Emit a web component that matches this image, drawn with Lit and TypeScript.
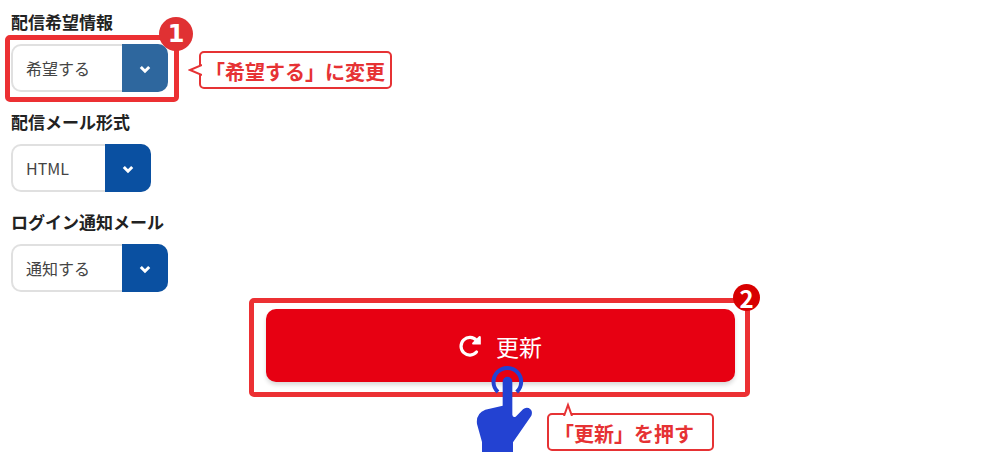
import { LitElement, html, css } from "lit";
import { customElement, property } from "lit/decorators.js";

@customElement("select-field")
class SelectField extends LitElement {
  @property() label = "";
  @property({ attribute: false }) options: string[] = [];
  @property({ type: Boolean, reflect: true }) active = false;

  static styles = css`
    :host { display: block; }
    .label {
      display: block;
      font-size: 17px;
      font-weight: 700;
      line-height: 24px;
      color: #222;
      margin-bottom: 10px;
    }
    .control {
      position: relative;
      display: inline-block;
      vertical-align: top;
    }
    .select {
      appearance: none;
      display: block;
      box-sizing: border-box;
      height: 48px;
      min-width: 140px;
      margin: 0;
      padding: 0 75px 0 13px;
      border: 2px solid #e0e0e0;
      border-radius: 10px;
      background: #fff;
      color: #444;
      font: inherit;
      font-size: 16px;
    }
    .toggle {
      position: absolute;
      inset: 0 0 0 auto;
      width: 46px;
      display: grid;
      place-items: center;
      background: #0a50a1;
      border-radius: 0 10px 10px 0;
      pointer-events: none;
    }
    :host([active]) .toggle { background: #2e679e; }
    .chevron { width: 12px; height: 9px; margin-top: 3px; }
  `;

  render() {
    return html`
      <label class="label" for="choice">${this.label}</label>
      <div class="control">
        <select class="select" id="choice">
          ${this.options.map((o) => html`<option>${o}</option>`)}
        </select>
        <span class="toggle">
          <svg class="chevron" viewBox="0 0 12 9" aria-hidden="true">
            <path d="M1.8 2 L6 6.2 L10.2 2" fill="none" stroke="#fff" stroke-width="3" />
          </svg>
        </span>
        <slot></slot>
      </div>
    `;
  }
}

@customElement("app-root")
class AppRoot extends LitElement {
  static styles = css`
    :host {
      display: block;
      box-sizing: border-box;
      min-height: 100vh;
      overflow: hidden;
      background: #fff;
      font-family: "Noto Sans CJK JP", "Noto Sans", sans-serif;
    }
    .form { padding: 10px 13px 0 11px; }
    .fields { display: grid; gap: 18px; }
    .frame {
      border: 5px solid #ec3033;
      border-radius: 5px;
      box-sizing: border-box;
    }
    .frame-select {
      position: absolute;
      inset: -9px -11px -10px -6px;
      pointer-events: none;
    }
    .badge {
      position: absolute;
      display: grid;
      place-items: center;
      border-radius: 50%;
      color: #fff;
      font-size: 24px;
      font-weight: 700;
      line-height: 24px;
    }
    .badge-one {
      width: 34px;
      height: 34px;
      top: -23px;
      right: -19px;
      background: #e03133;
      font-family: "DejaVu Sans", sans-serif;
    }
    .badge-two {
      width: 27px;
      height: 27px;
      top: -19px;
      right: -15px;
      background: #d80000;
    }
    .callout {
      position: absolute;
      box-sizing: border-box;
      border: 2px solid currentColor;
      border-radius: 5px;
      background: #fff;
      color: #e63234;
      font-size: 20px;
      font-weight: 700;
      line-height: 31px;
      white-space: nowrap;
    }
    .callout-change {
      top: 7px;
      left: calc(100% + 31px);
      padding: 3px 5px 0 4px;
    }
    .callout-press {
      top: 110px;
      left: 293px;
      padding: 3px 18px 0 5px;
    }
    .tail { position: absolute; }
    .tail-left { width: 14px; height: 14px; left: -13px; top: 10px; }
    .tail-up { width: 12px; height: 14px; left: 13px; top: -13px; }
    .submit-frame {
      position: relative;
      width: 100%;
      max-width: 501px;
      margin: 6px auto 0;
      padding: 6px 10px 10px 12px;
    }
    .submit {
      display: flex;
      align-items: center;
      justify-content: center;
      gap: 15px;
      width: 100%;
      height: 73px;
      padding: 0;
      border: 0;
      border-radius: 10px;
      background: #e70012;
      box-shadow: 0 3px 4px rgba(0, 0, 0, 0.15);
      color: #fff;
      font: inherit;
      font-size: 23px;
    }
    .refresh { width: 22px; height: 22px; }
    .hand {
      position: absolute;
      left: 221px;
      top: 61px;
      width: 58px;
      height: 88px;
      pointer-events: none;
    }
  `;

  render() {
    return html`
      <form class="form" @submit=${(e: Event) => e.preventDefault()}>
        <div class="fields">
          <select-field label="配信希望情報" .options=${["希望する"]} active>
            <div class="frame frame-select"><span class="badge badge-one">1</span></div>
            <div class="callout callout-change">
              <svg class="tail tail-left" viewBox="0 0 14 14" aria-hidden="true">
                <path d="M14 2 L2 7 L14 12" fill="#fff" stroke="#e63234" stroke-width="2" />
              </svg>
              「希望する」に変更
            </div>
          </select-field>
          <select-field label="配信メール形式" .options=${["HTML"]}></select-field>
          <select-field label="ログイン通知メール" .options=${["通知する"]}></select-field>
        </div>
        <div class="frame submit-frame">
          <button class="submit" type="submit">
            <svg class="refresh" viewBox="0 0 22 22" aria-hidden="true">
              <path d="M17.5 5.5 A8.8 8.8 0 1 0 17.5 17" fill="none" stroke="#fff" stroke-width="3.2" stroke-linecap="round" />
              <path d="M20 1.2 Q21.8 0.6 21.8 2.4 V9.4 H13.6 Q12.6 8.6 13.4 7.8 Z" fill="#fff" />
            </svg>
            更新
          </button>
          <span class="badge badge-two">2</span>
          <svg class="hand" viewBox="75 132 174 264" aria-hidden="true">
            <path d="M144 216 A41.5 41.5 0 1 1 200 216" fill="none" stroke="#2342d2" stroke-width="12" />
            <path d="M158 185 A14.5 14.5 0 0 1 187 185 V284 Q188 293 197 290 L219 268 Q226 261 236 264 Q250 271 244 287 L189 367 V396 H96 V366 L81 312 Q77 280 106 269 L158 257 Z" fill="#2342d2" />
          </svg>
          <div class="callout callout-press">
            <svg class="tail tail-up" viewBox="0 0 12 14" aria-hidden="true">
              <path d="M2 14 L6 3 L10 14" fill="#fff" stroke="#e63234" stroke-width="2" />
            </svg>
            「更新」を押す
          </div>
        </div>
      </form>
    `;
  }
}
